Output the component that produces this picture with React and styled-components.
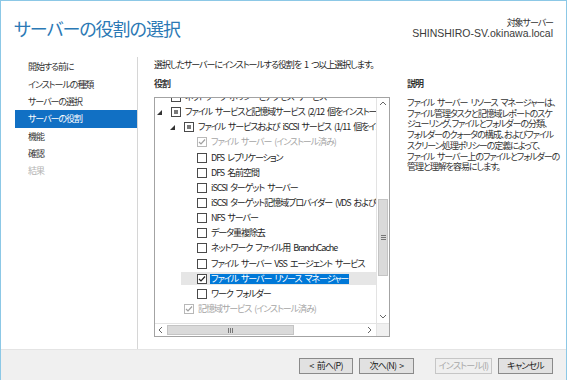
import React from "react";
import styled, { createGlobalStyle } from "styled-components";

const GlobalStyle = createGlobalStyle`
  html, body {
    margin: 0;
    padding: 0;
    background: #ffffff;
  }
  body {
    font-family: "Noto Sans CJK JP", "Liberation Sans", sans-serif;
    font-feature-settings: "palt";
    font-size: 9px;
    letter-spacing: -1.05px;
    word-spacing: 2px;
    color: #262626;
  }
`;

const Window = styled.div`
  width: 567px;
  height: 380px;
  box-sizing: border-box;
  border: 1px solid #8cc8e6;
  border-bottom: none;
  background: #ffffff;
  display: flex;
  flex-direction: column;
  overflow: hidden;
`;

const Header = styled.div`
  height: 56px;
  box-sizing: border-box;
  padding: 16px 13px 0 13px;
  display: flex;
  justify-content: space-between;
  align-items: flex-start;
`;

const Title = styled.h1`
  margin: 0;
  font-size: 18px;
  line-height: 22px;
  letter-spacing: -1px;
  font-weight: 400;
  color: #2b79b5;
`;

const ServerInfo = styled.div`
  text-align: right;
  line-height: 10px;
  color: #333;
  margin-top: 1px;
`;

const ServerName = styled.div`
  font-family: "Liberation Sans", sans-serif;
  font-size: 10.5px;
  letter-spacing: 0;
  word-spacing: 0;
  color: #3a3a3a;
`;

const Body = styled.div`
  flex: 1;
  display: flex;
  min-height: 0;
`;

const Nav = styled.nav`
  margin-left: 14px;
  width: 124px;
  box-sizing: border-box;
  border-right: 1px solid #d6d6d6;
  padding-top: 1.4px;
`;

const NavItem = styled.div`
  height: 17.3px;
  line-height: 17.3px;
  padding-left: 13px;
  color: ${(p) => (p.$active ? "#ffffff" : p.$disabled ? "#b4b4b4" : "#333333")};
  background: ${(p) => (p.$active ? "#1170c4" : "transparent")};
`;

const Main = styled.div`
  flex: 1;
  padding: 2px 13px 0 16px;
  display: flex;
  flex-direction: column;
`;

const Intro = styled.p`
  margin: 0;
  line-height: 12px;
  white-space: nowrap;
`;

const Columns = styled.div`
  display: flex;
  gap: 17px;
  margin-top: 7px;
`;

const Column = styled.div`
  display: flex;
  flex-direction: column;
  width: ${(p) => p.$width}px;
`;

const Label = styled.div`
  line-height: 12px;
  font-weight: 700;
  color: #333;
`;

const TreeBox = styled.div`
  margin-top: 7px;
  width: 236px;
  height: 240px;
  box-sizing: border-box;
  border: 1px solid #a3a3a3;
  display: grid;
  grid-template-columns: 221px 13px;
  grid-template-rows: 225px 13px;
`;

const Viewport = styled.div`
  overflow: hidden;
  position: relative;
`;

const TreeList = styled.div`
  margin-top: -8.6px;
`;

const Row = styled.div`
  height: 15.15px;
  display: flex;
  align-items: center;
  padding-left: ${(p) => p.$level * 13}px;
  white-space: nowrap;
`;

const RowInner = styled.div`
  flex: 1;
  height: 13px;
  display: flex;
  align-items: center;
  padding-left: 2px;
  background: ${(p) => (p.$selected ? "#e6e6e6" : "transparent")};
`;

const Expander = styled.span`
  width: 14px;
  height: 10px;
  display: flex;
  align-items: center;
  flex-shrink: 0;
`;

const Box = styled.span`
  width: 10px;
  height: 10px;
  box-sizing: border-box;
  flex-shrink: 0;
  border: 1px solid ${(p) => (p.$muted ? "#b8b8b8" : "#4a4a4a")};
  background: #ffffff;
  display: flex;
  align-items: center;
  justify-content: center;
`;

const Mixed = styled.span`
  width: 4px;
  height: 4px;
  background: #7a7a7a;
`;

const ItemText = styled.span`
  margin-left: 3px;
  line-height: 10px;
  padding: 0 1px;
  color: ${(p) => (p.$selected ? "#ffffff" : p.$muted ? "#a6a6a6" : "#262626")};
  background: ${(p) => (p.$selected ? "#0078d7" : "transparent")};
`;

const VScroll = styled.div`
  border-left: 1px solid #e3e3e3;
  display: flex;
  flex-direction: column;
`;

const HScroll = styled.div`
  border-top: 1px solid #e3e3e3;
  display: flex;
`;

const Arrow = styled.span`
  width: 12px;
  height: 12px;
  flex-shrink: 0;
  display: flex;
  align-items: center;
  justify-content: center;
`;

const Track = styled.div`
  flex: 1;
  display: flex;
  flex-direction: ${(p) => (p.$vertical ? "column" : "row")};
`;

const Thumb = styled.div`
  box-sizing: border-box;
  background: #dadada;
  border: 1px solid #c4c4c4;
  display: flex;
  align-items: center;
  justify-content: center;
  ${(p) =>
    p.$vertical
      ? `margin-top: ${p.$offset}px; height: ${p.$size}px; margin-left: 1px; margin-right: 1px;`
      : `margin-left: ${p.$offset}px; width: ${p.$size}px; margin-top: 1px; margin-bottom: 1px;`}
`;

const Corner = styled.div`
  background: #f0f0f0;
  border-left: 1px solid #e3e3e3;
  border-top: 1px solid #e3e3e3;
`;

const Description = styled.p`
  margin: 8px 0 0;
  line-height: 10.7px;
  white-space: nowrap;
  color: #333;
`;

const Footer = styled.div`
  height: 31px;
  box-sizing: border-box;
  background: #f0f0f0;
  border-top: 1px solid #e4e4e4;
  display: flex;
  justify-content: flex-end;
  align-items: flex-start;
  padding: 8px 13px 0 0;
  gap: 6px;
`;

const Button = styled.button`
  height: 16px;
  width: ${(p) => p.$width}px;
  padding: 0;
  margin-left: ${(p) => p.$gap || 0}px;
  box-sizing: border-box;
  font-family: "Noto Sans CJK JP", "Liberation Sans", sans-serif;
  font-feature-settings: "palt";
  font-size: 9px;
  letter-spacing: -0.8px;
  word-spacing: 2px;
  line-height: 14px;
  white-space: nowrap;
  color: ${(p) => (p.disabled ? "#a8a8a8" : "#222")};
  background: ${(p) => (p.disabled ? "#efefef" : "#e1e1e1")};
  border: 1px solid ${(p) => (p.disabled ? "#c6c6c6" : "#8a8a8a")};
  border-radius: 0;
`;

const Chevron = ({ dir }) => {
  const pts = {
    up: "1,5 4,2 7,5",
    down: "1,2 4,5 7,2",
    left: "5,1 2,4 5,7",
    right: "2,1 5,4 2,7",
  }[dir];
  return (
    <svg width="8" height="8" viewBox="0 0 8 8">
      <polyline points={pts} fill="none" stroke="#666" strokeWidth="1" />
    </svg>
  );
};

const Triangle = () => (
  <svg width="5" height="5" viewBox="0 0 5 5">
    <polygon points="5,0 5,5 0,5" fill="#333" />
  </svg>
);

const Check = ({ muted }) => (
  <svg width="8" height="8" viewBox="0 0 8 8">
    <polyline points="1,4 3,6 7,1.5" fill="none" stroke={muted ? "#a0a0a0" : "#222"} strokeWidth="1.2" />
  </svg>
);

const CheckBox = ({ state }) => {
  const muted = state === "installed";
  return (
    <Box $muted={muted}>
      {state === "mixed" && <Mixed />}
      {(state === "checked" || state === "installed") && <Check muted={muted} />}
    </Box>
  );
};

const navItems = [
  { label: "開始する前に" },
  { label: "インストールの種類" },
  { label: "サーバーの選択" },
  { label: "サーバーの役割", active: true },
  { label: "機能" },
  { label: "確認" },
  { label: "結果", disabled: true },
];

const roles = [
  { level: 0, state: "off", text: "ネットワーク ポリシーとアクセス サービス" },
  { level: 0, expand: true, state: "mixed", text: "ファイル サービスと記憶域サービス (2/12 個をインストール済み)" },
  { level: 1, expand: true, state: "mixed", text: "ファイル サービスおよび iSCSI サービス (1/11 個をインストール済み)" },
  { level: 2, state: "installed", text: "ファイル サーバー (インストール済み)" },
  { level: 2, state: "off", text: "DFS レプリケーション" },
  { level: 2, state: "off", text: "DFS 名前空間" },
  { level: 2, state: "off", text: "iSCSI ターゲット サーバー" },
  { level: 2, state: "off", text: "iSCSI ターゲット記憶域プロバイダー (VDS およびVSS ハードウェア プロバイダー)" },
  { level: 2, state: "off", text: "NFS サーバー" },
  { level: 2, state: "off", text: "データ重複除去" },
  { level: 2, state: "off", text: "ネットワーク ファイル用 BranchCache" },
  { level: 2, state: "off", text: "ファイル サーバー VSS エージェント サービス" },
  { level: 2, state: "checked", selected: true, text: "ファイル サーバー リソース マネージャー" },
  { level: 2, state: "off", text: "ワーク フォルダー" },
  { level: 1, state: "installed", text: "記憶域サービス (インストール済み)" },
];

const descLines = [
  "ファイル サーバー リソース マネージャーは、",
  "ファイル管理タスクと記憶域レポートのスケ",
  "ジューリング、ファイルとフォルダーの分類、",
  "フォルダーのクォータの構成、およびファイル",
  "スクリーン処理ポリシーの定義によって、",
  "ファイル サーバー上のファイルとフォルダーの",
  "管理と理解を容易にします。",
];

export default function App() {
  return (
    <>
      <GlobalStyle />
      <Window>
        <Header>
          <Title>サーバーの役割の選択</Title>
          <ServerInfo>
            <div>対象サーバー</div>
            <ServerName>SHINSHIRO-SV.okinawa.local</ServerName>
          </ServerInfo>
        </Header>
        <Body>
          <Nav>
            {navItems.map((n) => (
              <NavItem key={n.label} $active={n.active} $disabled={n.disabled}>
                {n.label}
              </NavItem>
            ))}
          </Nav>
          <Main>
            <Intro>選択したサーバーにインストールする役割を 1 つ以上選択します。</Intro>
            <Columns>
              <Column $width={236}>
                <Label>役割</Label>
                <TreeBox>
                  <Viewport>
                    <TreeList>
                      {roles.map((r, i) => (
                        <Row key={i} $level={r.level}>
                          <RowInner $selected={r.selected}>
                            <Expander>{r.expand && <Triangle />}</Expander>
                            <CheckBox state={r.state} />
                            <ItemText $selected={r.selected} $muted={r.state === "installed"}>
                              {r.text}
                            </ItemText>
                          </RowInner>
                        </Row>
                      ))}
                    </TreeList>
                  </Viewport>
                  <VScroll>
                    <Arrow><Chevron dir="up" /></Arrow>
                    <Track $vertical>
                      <Thumb $vertical $offset={89} $size={77}>
                        <svg width="5" height="5" viewBox="0 0 5 5">
                          <path d="M0 0.5H5M0 2.5H5M0 4.5H5" stroke="#777" strokeWidth="1" />
                        </svg>
                      </Thumb>
                    </Track>
                    <Arrow><Chevron dir="down" /></Arrow>
                  </VScroll>
                  <HScroll>
                    <Arrow><Chevron dir="left" /></Arrow>
                    <Track>
                      <Thumb $offset={0} $size={127}>
                        <svg width="5" height="5" viewBox="0 0 5 5">
                          <path d="M0.5 0V5M2.5 0V5M4.5 0V5" stroke="#777" strokeWidth="1" />
                        </svg>
                      </Thumb>
                    </Track>
                    <Arrow><Chevron dir="right" /></Arrow>
                  </HScroll>
                  <Corner />
                </TreeBox>
              </Column>
              <Column $width={146}>
                <Label>説明</Label>
                <Description>
                  {descLines.map((l, i) => (
                    <React.Fragment key={i}>
                      {l}
                      {i < descLines.length - 1 && <br />}
                    </React.Fragment>
                  ))}
                </Description>
              </Column>
            </Columns>
          </Main>
        </Body>
        <Footer>
          <Button $width={54}>&lt; 前へ(P)</Button>
          <Button $width={55}>次へ(N) &gt;</Button>
          <Button $width={57} $gap={15} disabled>
            インストール(I)
          </Button>
          <Button $width={55}>キャンセル</Button>
        </Footer>
      </Window>
    </>
  );
}
